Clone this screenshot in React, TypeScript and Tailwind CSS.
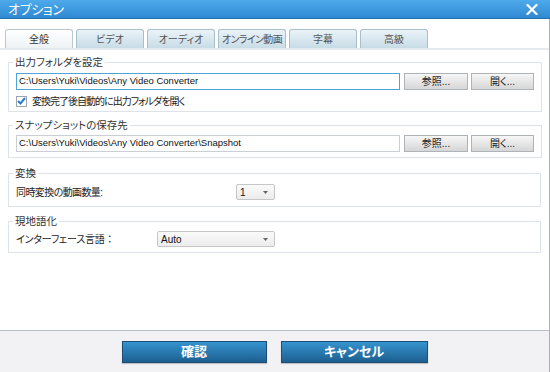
import React from "react";

const FONT = "font-['Liberation_Sans','Noto_Sans_CJK_JP',sans-serif] [font-feature-settings:'palt']";

function Tab({ label, active, tight }: { label: string; active?: boolean; tight?: boolean }) {
  return (
    <div
      className={
        "h-[19px] w-[68px] flex items-center justify-center rounded-t-[3px] border border-b-0 text-[10px] whitespace-nowrap overflow-hidden " +
        (tight ? "tracking-[-0.6px] " : "") +
        (active
          ? "border-[#b9c7d0] bg-gradient-to-b from-[#ffffff] to-[#eef2f4] text-[#333]"
          : "border-[#a9bfcc] bg-gradient-to-b from-[#eaf3f8] to-[#c8dce6] text-[#555]")
      }
    >
      {label}
    </div>
  );
}

function GrayButton({ label }: { label: string }) {
  return (
    <div className="h-[17px] flex items-center justify-center border border-[#aeb3b7] bg-gradient-to-b from-[#f7f7f7] to-[#d6d6d6] text-[10px] text-[#222]">
      {label}
    </div>
  );
}

function Select({ value, width }: { value: string; width: string }) {
  return (
    <div
      className={
        width +
        " h-[16px] flex items-center justify-between rounded-[2px] border border-[#c3c7ca] bg-gradient-to-b from-[#fafafa] to-[#ececec] pl-[3px] pr-[6px] text-[10px] text-[#111]"
      }
    >
      <span>{value}</span>
      <svg width="5" height="3" viewBox="0 0 5 3">
        <path d="M0 0 L5 0 L2.5 3 Z" fill="#666" />
      </svg>
    </div>
  );
}

function Group({ title, children, className }: { title: string; children: React.ReactNode; className?: string }) {
  return (
    <fieldset className={"w-[533px] border border-[#dde3e8] px-[7px] " + (className ?? "")}>
      <legend className="ml-[-3px] px-[2px] text-[10.5px] leading-[12px] text-[#333]">{title}</legend>
      {children}
    </fieldset>
  );
}

export default function App() {
  return (
    <div className={"w-[550px] h-[372px] flex flex-col bg-white overflow-hidden " + FONT}>
      {/* Title bar */}
      <div className="h-[19px] shrink-0 flex items-center justify-between bg-gradient-to-b from-[#4eaaea] to-[#2f89d3] border-b border-[#2a6fa8] pl-[8px] pr-[12px]">
        <span className="text-[13px] leading-none text-white tracking-[-0.3px]">オプション</span>
        <svg width="12" height="11" viewBox="0 0 12 11">
          <path d="M1.5 1 L10.5 10 M10.5 1 L1.5 10" stroke="#fff" strokeWidth="2.2" strokeLinecap="square" />
        </svg>
      </div>

      <div className="flex-1 flex flex-col w-[550px] border-r-[1.5px] border-[#a9b0b6]">
        {/* Content */}
        <div className="flex-1 flex flex-col">
          <div className="flex items-end gap-[3px] pl-[5px] pt-[10px]">
            <Tab label="全般" active />
            <Tab label="ビデオ" />
            <Tab label="オーディオ" />
            <Tab label="オンライン動画" tight />
            <Tab label="字幕" />
            <Tab label="高級" />
          </div>
          <div className="h-[2px] bg-[#e4eaee]" />

          <div className="flex flex-col pl-[8px]">
            <Group title="出力フォルダを設定" className="mt-[6px] pb-[4px]">
              <div className="mt-[5px] flex items-center">
                <div className="w-[384px] h-[17px] flex items-center border border-[#4ea6d8] px-[2px] text-[9.5px] text-[#111] whitespace-nowrap">
                  C:\Users\Yuki\Videos\Any Video Converter
                </div>
                <div className="ml-[4px] w-[64px]">
                  <GrayButton label="参照..." />
                </div>
                <div className="ml-[3px] w-[63px]">
                  <GrayButton label="開く..." />
                </div>
              </div>
              <div className="mt-[5px] h-[12px] flex items-center">
                <div className="w-[11px] h-[11px] border border-[#9aa4ab] bg-white flex items-center justify-center">
                  <svg width="9" height="8" viewBox="0 0 9 8">
                    <path d="M1 4 L3.5 6.5 L8 1" stroke="#2a7cd3" strokeWidth="2" fill="none" />
                  </svg>
                </div>
                <span className="ml-[5px] text-[10px] tracking-[-1px] text-[#222]">変換完了後自動的に出力フォルダを開く</span>
              </div>
            </Group>

            <Group title="スナップショットの保存先" className="mt-[7px] pb-[5px]">
              <div className="mt-[4px] flex items-center">
                <div className="w-[384px] h-[17px] flex items-center border border-[#c9cfd4] px-[2px] text-[9.5px] text-[#111] whitespace-nowrap">
                  C:\Users\Yuki\Videos\Any Video Converter\Snapshot
                </div>
                <div className="ml-[4px] w-[64px]">
                  <GrayButton label="参照..." />
                </div>
                <div className="ml-[3px] w-[63px]">
                  <GrayButton label="開く..." />
                </div>
              </div>
            </Group>

            <Group title="変換" className="mt-[9px] pb-[6px]">
              <div className="mt-[5px] flex items-center">
                <span className="w-[220px] text-[10px] tracking-[-0.6px] text-[#222]">同時変換の動画数量:</span>
                <Select value="1" width="w-[39px]" />
              </div>
            </Group>

            <Group title="現地語化" className="mt-[8px] pb-[5px]">
              <div className="mt-[4px] flex items-center">
                <span className="w-[141px] text-[10px] tracking-[-0.2px] text-[#222]">インターフェース言語 ：</span>
                <Select value="Auto" width="w-[118px]" />
              </div>
            </Group>
          </div>
        </div>

        {/* Footer */}
        <div className="h-[42px] shrink-0 border-t border-[#b8c1c8] bg-[#f2f2f4] flex justify-center gap-[14px] pt-[10px]">
          <div className="w-[145px] h-[22px] flex items-center justify-center border border-[#1b4f78] bg-gradient-to-b from-[#3594cf] to-[#1d5f90] text-[13px] font-semibold text-white shadow-[0_1px_1px_rgba(0,0,0,0.2)]">
            確認
          </div>
          <div className="w-[147px] h-[22px] flex items-center justify-center border border-[#1b4f78] bg-gradient-to-b from-[#3594cf] to-[#1d5f90] text-[13px] font-semibold text-white shadow-[0_1px_1px_rgba(0,0,0,0.2)]">
            キャンセル
          </div>
        </div>
      </div>
    </div>
  );
}
